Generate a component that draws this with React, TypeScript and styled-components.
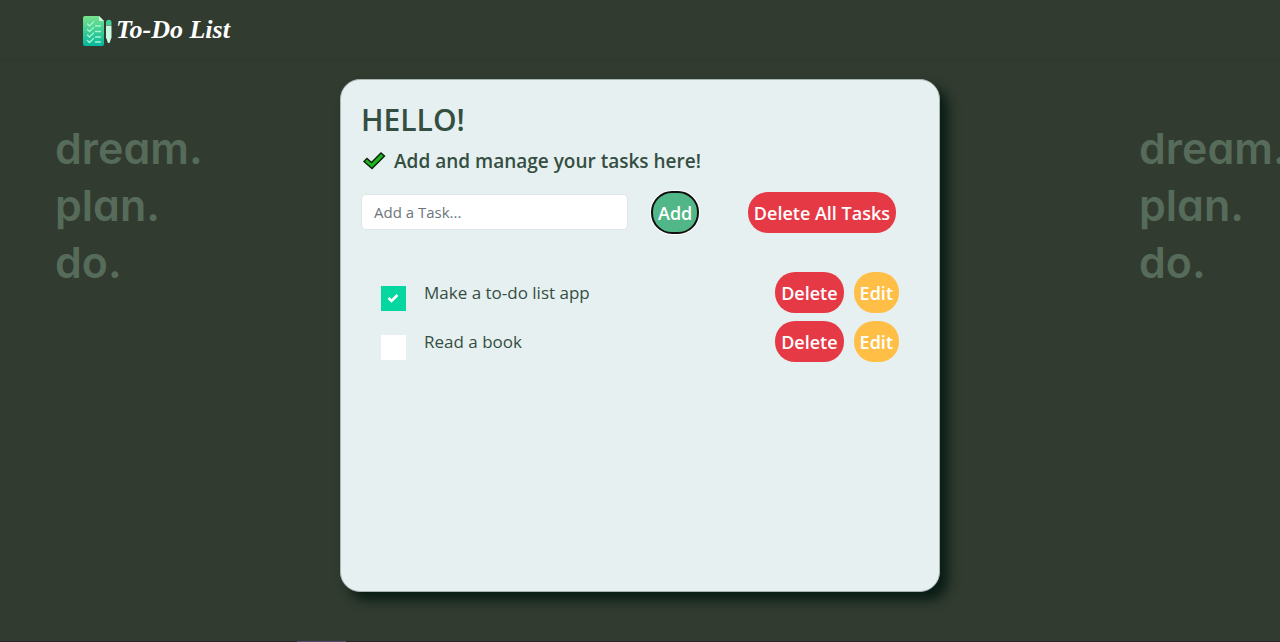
import React, { useState } from 'react';
import styled, { createGlobalStyle } from 'styled-components';

const GlobalStyle = createGlobalStyle`
  *, *::before, *::after { box-sizing: border-box; }
  body {
    margin: 0;
    background: #313b30;
    color: #344e41;
    font-family: 'Open Sans', 'Noto Sans', sans-serif;
    font-size: 16px;
  }
  h1, p, ul { margin: 0; padding: 0; }
`;

const Page = styled.div`
  position: relative;
  display: flex;
  flex-direction: column;
  min-height: 100vh;
  overflow: hidden;
`;

const Wallpaper = styled.div`
  position: absolute;
  inset: 120px 0 auto 0;
  display: grid;
  grid-template-columns: 1084px 1084px;
  overflow: hidden;
`;

const Motto = styled.p`
  padding-left: 55px;
  color: #566b59;
  font-family: Inter, sans-serif;
  font-feature-settings: 'cv11' 1, 'ss03' 1;
  font-size: 43px;
  font-weight: 600;
  line-height: 57px;
  white-space: pre-line;
`;

const Navbar = styled.header`
  display: flex;
  align-items: center;
  height: 60px;
  padding: 0 80px;
  border-bottom: 1px solid #2e372d;
`;

const Brand = styled.a`
  display: flex;
  align-items: center;
  gap: 4px;
  color: #fff;
  font-family: 'Liberation Serif', serif;
  font-size: 26px;
  font-style: italic;
  font-weight: 700;
  line-height: 30px;
  text-decoration: none;
`;

const Main = styled.main`
  position: relative;
  display: flex;
  flex: 1;
  justify-content: center;
  padding: 19px 16px 49px;
`;

const Card = styled.section`
  width: 100%;
  max-width: 600px;
  min-height: 513px;
  padding: 20px;
  border: 1px solid #a9b5b1;
  border-radius: 20px;
  background: #e7f0f1;
  box-shadow: 8px 8px 12px #081c15;
`;

const Title = styled.h1`
  font-size: 30px;
  font-weight: 600;
  line-height: 40px;
`;

const Subtitle = styled.p`
  display: flex;
  align-items: center;
  gap: 6px;
  margin-top: 5px;
  font-size: 19px;
  font-weight: 600;
  line-height: 32px;
`;

const Form = styled.form`
  display: flex;
  align-items: center;
  margin-top: 15px;
`;

const TaskInput = styled.input`
  width: 267px;
  height: 36px;
  margin: 0 24px 2px 0;
  padding: 0 12px;
  border: 1px solid #dfe7e6;
  border-radius: 5px;
  background: #fff;
  color: #344e41;
  font: 400 15px 'Open Sans', sans-serif;
  &::placeholder { color: #6c757d; opacity: 1; }
`;

const Button = styled.button<{ $tone: string; $ring?: boolean }>`
  height: 41px;
  padding: 0 6px;
  border: 0;
  border-radius: 20px;
  background: ${(p) => p.$tone};
  outline: ${(p) => (p.$ring ? '2px solid #101010' : 'none')};
  outline-offset: -1px;
  box-shadow: ${(p) => (p.$ring ? '0 0 0 2px #fff' : 'none')};
  color: #fff;
  font: 600 18px 'Open Sans', sans-serif;
  white-space: nowrap;
  cursor: pointer;
`;

const ClearSlot = styled.div`
  margin-left: auto;
  margin-right: 23px;
`;

const Tasks = styled.ul`
  display: grid;
  gap: 8px;
  margin-top: 39px;
  padding: 0 20px;
  list-style: none;
`;

const TaskRow = styled.li`
  display: flex;
  align-items: center;
  gap: 10px;
`;

const TaskLabel = styled.label`
  display: flex;
  flex: 1;
  gap: 18px;
  align-items: flex-end;
  height: 41px;
  font-size: 17px;
  line-height: 40px;
`;

const Check = styled.input`
  appearance: none;
  width: 25px;
  height: 25px;
  margin: 0;
  background: #fff;
  &:checked { background: #06d6a0; }
`;

const Box = styled.span`
  display: grid;
  height: 27px;
  & > * { grid-area: 1 / 1; }
  & > svg { margin: 7px 0 0 6px; pointer-events: none; }
`;

const BottomEdge = styled.div`
  height: 1px;
  background: linear-gradient(90deg, #29232f 297px, #544a70 297px 346px, #29232f 346px);
`;

const Logo = () => (
  <svg width="32" height="32" viewBox="0 0 32 32" aria-hidden="true">
    <defs>
      <linearGradient id="sheet" x1="0" y1="0" x2="0" y2="1">
        <stop offset="0" stopColor="#76e28c" />
        <stop offset="1" stopColor="#04b8a0" />
      </linearGradient>
    </defs>
    <path d="M5 2h14l5 5v23a2 2 0 0 1-2 2H5a2 2 0 0 1-2-2V4a2 2 0 0 1 2-2z" fill="url(#sheet)" />
    <path d="M19 2l5 5h-3.500a1.500 1.500 0 0 1-1.500-1.500z" fill="#d4fbe6" />
    <path d="M7.500 10l2 2 4-4M7.500 15.500l2 2 4-4M7.500 21l2 2 4-4M7.500 26.500l2 2 4-4M15.500 12h5M15.500 17.500h5M15.500 23h5M15.500 28h5" fill="none" stroke="#a5f5cf" strokeWidth="1.300" strokeLinecap="round" />
    <path d="M26 11.500h5.500v12l-2 5.500h-1.500l-2-5.500z" fill="#c8fbe2" />
    <path d="M26 11V8.500a2.750 2.750 0 0 1 5.500 0V11z" fill="#3fd39b" />
  </svg>
);

const GreenTick = () => (
  <svg width="27" height="24" viewBox="0 0 27 24" aria-hidden="true">
    <path d="M3 12.500l3-3 4.500 4 9.500-9.500 3.500 3L11 19.500z" fill="#1fb41f" stroke="#08210a" strokeWidth="1.400" />
  </svg>
);

const initial = [
  { id: 1, text: 'Make a to-do list app', done: true },
  { id: 2, text: 'Read a book', done: false },
];

export default function App() {
  const [tasks, setTasks] = useState(initial);
  const toggle = (id: number) =>
    setTasks(tasks.map((t) => (t.id === id ? { ...t, done: !t.done } : t)));
  const motto = 'dream.\nplan.\ndo.';

  return (
    <Page>
      <GlobalStyle />
      <Wallpaper>
        <Motto>{motto}</Motto>
        <Motto>{motto}</Motto>
      </Wallpaper>
      <Navbar>
        <Brand href="#"><Logo />To-Do List</Brand>
      </Navbar>
      <Main>
        <Card>
          <Title>HELLO!</Title>
          <Subtitle><GreenTick />Add and manage your tasks here!</Subtitle>
          <Form onSubmit={(e) => e.preventDefault()}>
            <TaskInput aria-label="Add a Task" placeholder="Add a Task..." />
            <Button $tone="#52b788" $ring>Add</Button>
            <ClearSlot>
              <Button type="button" $tone="#e63946" onClick={() => setTasks([])}>Delete All Tasks</Button>
            </ClearSlot>
          </Form>
          <Tasks>
            {tasks.map((t) => (
              <TaskRow key={t.id}>
                <TaskLabel>
                  <Box>
                    <Check type="checkbox" checked={t.done} onChange={() => toggle(t.id)} />
                    {t.done && (
                      <svg width="12" height="10" viewBox="0 0 12 10" aria-hidden="true">
                        <path d="M1.500 5l3 3L10.500 2" fill="none" stroke="#fff" strokeWidth="2.500" />
                      </svg>
                    )}
                  </Box>
                  {t.text}
                </TaskLabel>
                <Button $tone="#e63946" onClick={() => setTasks(tasks.filter((x) => x.id !== t.id))}>Delete</Button>
                <Button $tone="#ffbf47">Edit</Button>
              </TaskRow>
            ))}
          </Tasks>
        </Card>
      </Main>
      <BottomEdge />
    </Page>
  );
}
